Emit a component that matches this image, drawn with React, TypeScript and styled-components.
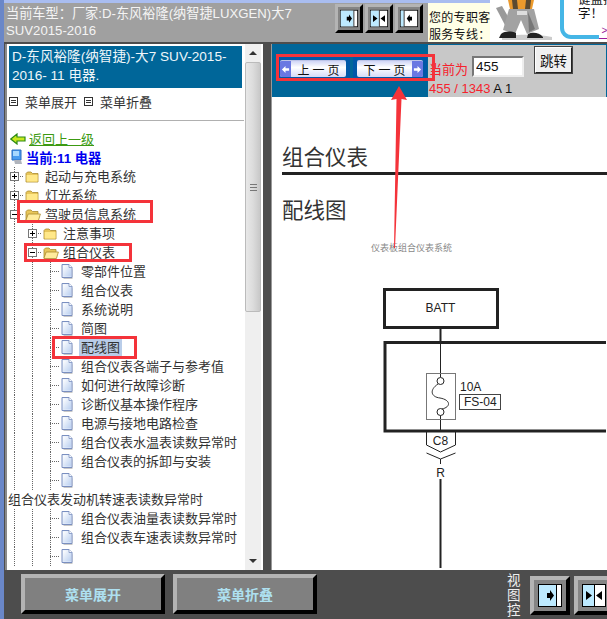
import React from 'react';
import styled, { createGlobalStyle } from 'styled-components';

const CJK = `"Liberation Sans", "Noto Sans CJK SC", sans-serif`;

const GlobalStyle = createGlobalStyle`
  html, body {
    margin: 0;
    padding: 0;
    background: #4d4d4d;
    overflow: hidden;
  }
  * { box-sizing: border-box; }
`;

const Window = styled.div`
  position: relative;
  width: 607px;
  height: 619px;
  overflow: hidden;
  display: flex;
  flex-direction: column;
  border-left: 4px solid #6a87c8;
  background: #4d4d4d;
  font-family: ${CJK};
  font-size: 13px;
  color: #222;
`;

/* header */
const Header = styled.header`
  display: flex;
  height: 42px;
  flex-shrink: 0;
`;

const HeaderMain = styled.div`
  display: flex;
  flex: 1;
  min-width: 0;
  border-top: 3px solid #a9bdf0;
  background: #a0a0a0;
`;

const CarTitle = styled.div`
  width: 331px;
  padding: 2px 0 0 2px;
  font-size: 13.2px;
  line-height: 17px;
  color: #f4f4f4;
`;

const HeaderButtons = styled.div`
  display: flex;
  gap: 2px;
  padding-top: 1px;
`;

const BevelButton = styled.button<{ $large?: boolean }>`
  display: flex;
  align-items: center;
  justify-content: center;
  flex-shrink: 0;
  padding: 0;
  width: ${({ $large }) => ($large ? '40px' : '28px')};
  height: ${({ $large }) => ($large ? '39px' : '29px')};
  border-style: solid;
  border-width: ${({ $large }) => ($large ? '4px' : '3px')};
  border-color: #b4b4b4 #000 #000 #b4b4b4;
  background: #858585;

  svg {
    width: ${({ $large }) => ($large ? '24px' : '18px')};
    height: ${({ $large }) => ($large ? '23px' : '19px')};
  }
`;

const Ad = styled.div`
  display: flex;
  width: 179px;
  flex-shrink: 0;
  background: #fff;
`;

const AdText = styled.div`
  width: 62px;
  padding: 7px 0 0 1px;
  border-top: 3px solid #a9bdf0;
  background: #ffffe6;
  font-size: 12px;
  line-height: 17px;
  letter-spacing: 0.3px;
  color: #111;
  white-space: nowrap;
`;

const Mechanic = styled.svg`
  width: 67px;
  height: 42px;
  flex-shrink: 0;
`;

const Bubble = styled.div`
  position: relative;
  flex: 1;
`;

const BubbleFrame = styled.div`
  height: 39px;
  margin-left: 3px;
  padding-left: 14px;
  border-left: 4px solid #45b6e6;
  border-bottom: 4px solid #45b6e6;
  border-bottom-left-radius: 11px;
  overflow: hidden;
  font-size: 12.5px;
  line-height: 14px;
  color: #111;
`;

const BubbleText = styled.div<{ $first?: boolean }>`
  margin-top: ${({ $first }) => ($first ? '-7px' : '0')};
  white-space: nowrap;
`;

const BubbleMore = styled.a`
  position: absolute;
  right: 0;
  top: 24px;
  width: 17px;
  height: 15px;
  padding-left: 3px;
  border-bottom: 1px solid #9a1a9a;
  background: #fff;
  font-size: 10px;
  line-height: 13px;
  color: #9a1a9a;
`;

/* main */
const Main = styled.main`
  display: flex;
  gap: 8px;
  height: 528px;
  flex-shrink: 0;
  padding: 2px 0 0 1px;
`;

const LeftPanel = styled.aside`
  display: flex;
  width: 258px;
  flex-shrink: 0;
  padding-right: 2px;
  border-left: 2px solid #8a8a8a;
  background: #fff;
`;

const Pane = styled.div`
  flex: 1;
  min-width: 0;
  overflow: hidden;
  padding-top: 2px;
`;

const ChapterTitle = styled.div`
  height: 42px;
  margin: 0 3px 0 2px;
  padding: 1px 0 0 3px;
  background: #006699;
  color: #eef6fa;
  font-size: 13.6px;
  line-height: 19px;
`;

const MenuLinks = styled.div`
  display: flex;
  align-items: center;
  gap: 7px;
  height: 19px;
  margin-top: 4px;
  padding: 0 2px;
  color: #333;
`;

const MenuLink = styled.span`
  display: flex;
  align-items: center;
  gap: 7px;
`;

const MenuIcon = styled.i`
  display: block;
  width: 9px;
  height: 9px;
  border: 1px solid #333;
  background: repeating-linear-gradient(#333 0 1px, #fff 1px 2px);
  background-clip: content-box;
  padding: 1px;
`;

const Divider = styled.hr`
  height: 1px;
  margin: 9px 1px 8px 0;
  border: 0;
  background: #b0b0b0;
`;

const InfoRow = styled.div`
  display: flex;
  align-items: center;
  height: 19px;
  padding-left: 3px;
`;

const BackLink = styled.a`
  margin-left: 3px;
  color: #3c9a12;
  text-decoration: underline;
`;

const CurrentLabel = styled.strong`
  margin-left: 3px;
  color: #0000f0;
  font-size: 13.3px;
`;

const Tree = styled.ul`
  margin: 0 0 0 -2px;
  padding: 0;
  list-style: none;
  white-space: nowrap;
`;

const Row = styled.li`
  display: flex;
  align-items: center;
  height: 19px;
  color: #333;
`;

const Cell = styled.span<{ $branch?: boolean }>`
  position: relative;
  display: flex;
  align-items: center;
  justify-content: center;
  width: 18px;
  height: 19px;
  flex-shrink: 0;
  background-repeat: no-repeat, repeat-y;
  background-image: ${({ $branch }) =>
      $branch ? 'repeating-linear-gradient(90deg, #666 0 1px, transparent 1px 2px)' : 'none'},
    linear-gradient(#666 50%, transparent 50%);
  background-size: 9px 1px, 1px 2px;
  background-position: 9px 9px, 9px 0;
`;

const Expander = styled.span<{ $open?: boolean }>`
  position: relative;
  width: 9px;
  height: 9px;
  margin-left: 1px;
  border: 1px solid #777;
  background: #fff;

  &::before {
    content: '';
    position: absolute;
    left: 1px;
    top: 3px;
    width: 5px;
    height: 1px;
    background: #000;
  }

  &::after {
    content: '';
    display: ${({ $open }) => ($open ? 'none' : 'block')};
    position: absolute;
    left: 3px;
    top: 1px;
    width: 1px;
    height: 5px;
    background: #000;
  }
`;

const IconSlot = styled.span`
  display: flex;
  width: 22px;
  padding-left: 2px;
  flex-shrink: 0;
`;

const Label = styled.span<{ $selected?: boolean }>`
  background: ${({ $selected }) => ($selected ? '#b9cde9' : 'transparent')};
  margin-left: ${({ $selected }) => ($selected ? '-2px' : '0')};
  padding: ${({ $selected }) => ($selected ? '0 2px' : '0')};
  line-height: 17px;
`;

const WrappedRow = styled.li`
  height: 19px;
  padding-left: 3px;
  line-height: 19px;
  color: #333;
`;

const Scrollbar = styled.div`
  display: flex;
  flex-direction: column;
  width: 16px;
  flex-shrink: 0;
  background: #efefef;
`;

const ScrollArrow = styled.div<{ $down?: boolean }>`
  display: flex;
  align-items: center;
  justify-content: center;
  height: 18px;
  flex-shrink: 0;

  &::before {
    content: '';
    border-left: 4px solid transparent;
    border-right: 4px solid transparent;
    border-${({ $down }) => ($down ? 'top' : 'bottom')}: 4px solid #333;
  }
`;

const ScrollTrack = styled.div`
  flex: 1;
  display: flex;
  flex-direction: column;
`;

const ScrollThumb = styled.div`
  display: flex;
  align-items: center;
  justify-content: center;
  height: 250px;
  border: 1px solid #bbb;
  border-radius: 2px;
  background: linear-gradient(90deg, #e8e8e8, #dcdcdc 50%, #c8c8c8);
`;

const ThumbGrip = styled.div`
  width: 7px;
  height: 7px;
  background: repeating-linear-gradient(#777 0 1px, transparent 1px 3px);
`;

const RightPanel = styled.section`
  position: relative;
  flex: 1;
  min-width: 0;
  display: flex;
  flex-direction: column;
  border-left: 1px solid #999;
  background: #fff;
`;

const NavBar = styled.div`
  display: flex;
  height: 53px;
  flex-shrink: 0;
  padding-right: 1px;
  background: #006699;
`;

const NavButtons = styled.div`
  display: flex;
  align-items: flex-end;
  width: 156px;
  flex-shrink: 0;
  gap: 3px;
  padding: 0 0 17px 4px;
`;

const PagerCell = styled.div`
  display: flex;
  justify-content: center;
  align-items: center;
  width: 74px;
  height: 23px;
  background: #0058a8;
`;

const PagerButton = styled.button`
  display: flex;
  align-items: center;
  width: 66px;
  height: 17px;
  padding: 0;
  border: 0;
  border-top: 1px solid #bcc4e8;
  border-radius: 2px;
  background: linear-gradient(#cfd5f6, #fff 40%, #d5dbf8);
  font-family: ${CJK};
  font-size: 12px;
  letter-spacing: 3px;
  color: #111;
  overflow: hidden;
`;

const PagerArrow = styled.span`
  display: flex;
  align-items: center;
  justify-content: center;
  width: 11px;
  height: 100%;
  flex-shrink: 0;
  background: #6a78e2;

  svg {
    width: 9px;
    height: 9px;
  }
`;

const PagerText = styled.span`
  flex: 1;
  padding-left: 3px;
  text-align: center;
`;

const PageInfo = styled.div`
  flex: 1;
  margin-top: 1px;
  display: grid;
  grid-template-columns: 43px 52px auto;
  grid-template-rows: 35px 17px;
  padding-left: 1px;
  background: #c8c8c8;
  color: #f5222d;
`;

const PageLabel = styled.span`
  align-self: end;
  margin-bottom: 2px;
  font-size: 13px;
  white-space: nowrap;
`;

const PageInput = styled.input`
  align-self: end;
  width: 52px;
  height: 21px;
  margin-bottom: 3px;
  padding: 0 0 0 2px;
  border: 2px solid;
  border-color: #777 #eee #eee #777;
  background: #fff;
  font-family: "Liberation Sans", sans-serif;
  font-size: 13.5px;
  color: #111;
`;

const JumpButton = styled.button`
  justify-self: start;
  align-self: start;
  width: 39px;
  height: 28px;
  margin: 1px 0 0 10px;
  padding: 0;
  border: 2px solid;
  border-color: #fff #222 #222 #fff;
  outline: 1px solid #444;
  outline-offset: -1px;
  background: #f0f0f0;
  font-family: ${CJK};
  font-size: 13.5px;
  color: #111;
`;

const PageCount = styled.div`
  grid-column: 1 / -1;
  font-size: 13px;
  line-height: 17px;
  white-space: nowrap;
`;

const PageRest = styled.span`
  color: #111;
`;

const Document = styled.article`
  flex: 1;
  min-height: 0;
  overflow: hidden;
  padding: 46px 0 0 10px;
`;

const DocTitle = styled.h1`
  margin: 0;
  height: 29px;
  padding-top: 2px;
  font-size: 21.5px;
  font-weight: 400;
  line-height: 27px;
  color: #333;
`;

const DocRule = styled.div`
  height: 3px;
  background: #222;
`;

const DocSubtitle = styled.h2`
  margin: 21px 0 0;
  font-size: 21.5px;
  font-weight: 400;
  line-height: 30px;
  color: #333;
`;

const Caption = styled.div`
  margin: 16px 0 0 89px;
  font-size: 9px;
  line-height: 12px;
  color: #888;
`;

const Diagram = styled.svg`
  display: block;
  margin: 26px 0 0 57px;
  width: 267px;
  height: 290px;
`;

/* footer */
const Footer = styled.footer`
  display: flex;
  align-items: flex-start;
  flex: 1;
  padding: 4px 0 0 17px;
  overflow: hidden;
`;

const FooterButton = styled.button`
  width: 144px;
  height: 40px;
  flex-shrink: 0;
  margin-right: 8px;
  padding: 0;
  border: 4px solid;
  border-color: #b4b4b4 #000 #000 #b4b4b4;
  background: #808080;
  font-family: ${CJK};
  font-size: 14px;
  font-weight: 700;
  color: #aee0f0;
`;

const ViewLabel = styled.div`
  width: 14px;
  margin: -1px 9px 0 182px;
  flex-shrink: 0;
  font-size: 13.5px;
  line-height: 15px;
  color: #eee;
`;

const ViewButtons = styled.div`
  display: flex;
  gap: 4px;
  padding-top: 2px;
`;

/* overlays drawn over the screenshot */
const Mark = styled.div<{ $x: number; $y: number; $w: number; $h: number }>`
  position: absolute;
  left: ${({ $x }) => $x - 4}px;
  top: ${({ $y }) => $y}px;
  width: ${({ $w }) => $w}px;
  height: ${({ $h }) => $h}px;
  border: 3px solid #f4333a;
  pointer-events: none;
`;

const ArrowOverlay = styled.svg`
  position: absolute;
  left: 380px;
  top: 84px;
  width: 30px;
  height: 170px;
  pointer-events: none;
`;

const FolderIcon = ({ open }: { open?: boolean }) => (
  <svg width="16" height="14" viewBox="0 0 16 14">
    <path d="M1 3.5 2.5 2H6l1.500 1.500H13V12H1z" fill="#e8c65a" stroke="#a98a2e" strokeWidth="0.8" />
    {open ? (
      <path d="M1 12 3.200 6H15.400L13.400 12.600H1z" fill="#ffeb9c" stroke="#a98a2e" strokeWidth="0.8" />
    ) : (
      <path d="M1.600 5h11v6.600h-11z" fill="#ffe889" />
    )}
  </svg>
);

const DocIcon = () => (
  <svg width="13" height="15" viewBox="0 0 13 15">
    <path d="M2.500 2h7v13h-7z M9.500 4l2 1.500V15h-2z" fill="#c8c8c8" />
    <path d="M1 .5h7l3 3V13.500H1z" fill="#e6eefb" stroke="#7a8fc0" strokeWidth="1" />
    <path d="M2 1.500h5v2h3v9H2z" fill="url(#docFill)" />
    <path d="M8 .5v3h3" fill="#fff" stroke="#7a8fc0" strokeWidth="0.8" />
    <defs>
      <linearGradient id="docFill" x1="0" y1="0" x2="1" y2="1">
        <stop offset="0" stopColor="#ffffff" />
        <stop offset="1" stopColor="#b9cff0" />
      </linearGradient>
    </defs>
  </svg>
);

const BackIcon = () => (
  <svg width="16" height="12" viewBox="0 0 16 12">
    <path d="M.8 6 7 1v3h8v4H7v3z" fill="#c8e81e" stroke="#2c8a14" strokeWidth="1.200" />
  </svg>
);

const ComputerIcon = () => (
  <svg width="13" height="17" viewBox="0 0 13 17">
    <path d="M2 1h9v10H2z" fill="#4a9cf0" stroke="#2b6cc0" />
    <path d="M3 2h6v5H3z" fill="#a8d8ff" />
    <path d="M4 11h7l1 4H5z" fill="#b0b4bc" />
  </svg>
);

const PagerGlyph = ({ flip }: { flip?: boolean }) => (
  <svg viewBox="0 0 10 10" transform={flip ? 'scale(-1 1)' : undefined}>
    <path d="M9 3.500H5V1L1 5l4 4V6.500h4z" fill="#fff" />
  </svg>
);

type ToggleKind = 'right' | 'both' | 'left';

const ToggleIcon = ({ kind }: { kind: ToggleKind }) => {
  const split = kind === 'right' ? 18 : kind === 'both' ? 12 : 5;
  return (
    <svg viewBox="0 0 24 23">
      <rect x="0.500" y="0.500" width="23" height="22" fill="#fff" stroke="#000" />
      <rect x="1" y="1" width={split - 1} height="21" fill="#bdeaff" />
      <path d={`M${split + 0.5} 1V22`} stroke="#000" />
      {kind === 'right' && <path d="M9 9h3V6l4 5.500-4 5.500v-3H9z" fill="#000" />}
      {kind === 'both' && <path d="M4 7v9l6-4.500zM20 7v9l-6-4.500z" fill="#000" />}
      {kind === 'left' && <path d="M16 9h-3V6l-4 5.500 4 5.500v-3h3z" fill="#000" />}
    </svg>
  );
};

type TreeNode = {
  level: number;
  label?: string;
  kind: 'closed' | 'open' | 'doc' | 'wrapped';
  selected?: boolean;
};

const nodes: TreeNode[] = [
  { level: 0, kind: 'closed', label: '起动与充电系统' },
  { level: 0, kind: 'closed', label: '灯光系统' },
  { level: 0, kind: 'open', label: '驾驶员信息系统' },
  { level: 1, kind: 'closed', label: '注意事项' },
  { level: 1, kind: 'open', label: '组合仪表' },
  { level: 2, kind: 'doc', label: '零部件位置' },
  { level: 2, kind: 'doc', label: '组合仪表' },
  { level: 2, kind: 'doc', label: '系统说明' },
  { level: 2, kind: 'doc', label: '简图' },
  { level: 2, kind: 'doc', label: '配线图', selected: true },
  { level: 2, kind: 'doc', label: '组合仪表各端子与参考值' },
  { level: 2, kind: 'doc', label: '如何进行故障诊断' },
  { level: 2, kind: 'doc', label: '诊断仪基本操作程序' },
  { level: 2, kind: 'doc', label: '电源与接地电路检查' },
  { level: 2, kind: 'doc', label: '组合仪表水温表读数异常时' },
  { level: 2, kind: 'doc', label: '组合仪表的拆卸与安装' },
  { level: 2, kind: 'doc' },
  { level: 0, kind: 'wrapped', label: '组合仪表发动机转速表读数异常时' },
  { level: 2, kind: 'doc', label: '组合仪表油量表读数异常时' },
  { level: 2, kind: 'doc', label: '组合仪表车速表读数异常时' },
  { level: 2, kind: 'doc' },
];

const TreeRow = ({ node }: { node: TreeNode }) => {
  if (node.kind === 'wrapped') return <WrappedRow>{node.label}</WrappedRow>;
  const isDoc = node.kind === 'doc';
  return (
    <Row>
      {Array.from({ length: node.level }).map((_, i) => (
        <Cell key={i} />
      ))}
      <Cell $branch>{!isDoc && <Expander $open={node.kind === 'open'} />}</Cell>
      <IconSlot>{isDoc ? <DocIcon /> : <FolderIcon open={node.kind === 'open'} />}</IconSlot>
      {node.label && <Label $selected={node.selected}>{node.label}</Label>}
    </Row>
  );
};

export default function App() {
  return (
    <>
      <GlobalStyle />
      <Window>
        <Header>
          <HeaderMain>
            <CarTitle>当前车型：厂家:D-东风裕隆(纳智捷LUXGEN)大7 SUV2015-2016</CarTitle>
            <HeaderButtons>
              <BevelButton><ToggleIcon kind="right" /></BevelButton>
              <BevelButton><ToggleIcon kind="both" /></BevelButton>
              <BevelButton><ToggleIcon kind="left" /></BevelButton>
            </HeaderButtons>
          </HeaderMain>
          <Ad>
            <AdText>
              您的专职客
              <br />
              服务专线：
            </AdText>
            <Mechanic viewBox="0 0 67 42">
              <path d="M12 37c12-3 36-3 50 0v3H12z" fill="#ccc" />
              <path d="M6 8 12 6 20 20 16 27z" fill="#9a9a9a" />
              <path d="M18 0h26l-2 9H20z" fill="#ec9a2c" />
              <path d="M22 0h5l1 9h-5zM36 0h5l-1 9h-5z" fill="#5c4a30" />
              <path d="M19 9h25l5 20-12 5-6-14-6 14-12-4z" fill="#a2a2a2" />
              <path d="M27 11h10v4H27z" fill="#ddd" />
              <path d="M38 12l7 17-6 3z" fill="#777" />
              <path d="M11 34c4-3 10-3 15-1v5H9zM38 34c4-2 11-2 15 3v1H37z" fill="#222" />
            </Mechanic>
            <Bubble>
              <BubbleFrame>
                <BubbleText $first>键盘拉</BubbleText>
                <BubbleText>字！</BubbleText>
              </BubbleFrame>
              <BubbleMore>&gt;&gt;</BubbleMore>
            </Bubble>
          </Ad>
        </Header>

        <Main>
          <LeftPanel>
            <Pane>
              <ChapterTitle>D-东风裕隆(纳智捷)-大7 SUV-2015-2016- 11 电器.</ChapterTitle>
              <MenuLinks>
                <MenuLink><MenuIcon />菜单展开</MenuLink>
                <MenuLink><MenuIcon />菜单折叠</MenuLink>
              </MenuLinks>
              <Divider />
              <InfoRow>
                <BackIcon />
                <BackLink>返回上一级</BackLink>
              </InfoRow>
              <InfoRow>
                <ComputerIcon />
                <CurrentLabel>当前:11 电器</CurrentLabel>
              </InfoRow>
              <Tree>
                {nodes.map((node, i) => (
                  <TreeRow key={i} node={node} />
                ))}
              </Tree>
            </Pane>
            <Scrollbar>
              <ScrollArrow />
              <ScrollTrack>
                <ScrollThumb><ThumbGrip /></ScrollThumb>
              </ScrollTrack>
              <ScrollArrow $down />
            </Scrollbar>
          </LeftPanel>

          <RightPanel>
            <NavBar>
              <NavButtons>
                <PagerCell>
                  <PagerButton>
                    <PagerArrow><PagerGlyph /></PagerArrow>
                    <PagerText>上一页</PagerText>
                  </PagerButton>
                </PagerCell>
                <PagerCell>
                  <PagerButton>
                    <PagerText>下一页</PagerText>
                    <PagerArrow><PagerGlyph flip /></PagerArrow>
                  </PagerButton>
                </PagerCell>
              </NavButtons>
              <PageInfo>
                <PageLabel>当前为</PageLabel>
                <PageInput readOnly value="455" />
                <JumpButton>跳转</JumpButton>
                <PageCount>
                  455 / 1343 <PageRest>A 1</PageRest>
                </PageCount>
              </PageInfo>
            </NavBar>
            <Document>
              <DocTitle>组合仪表</DocTitle>
              <DocRule />
              <DocSubtitle>配线图</DocSubtitle>
              <Caption>仪表板组合仪表系统</Caption>
              <Diagram viewBox="340 280 267 290" fontFamily="Liberation Sans, sans-serif" fontSize="12" fill="#222">
                <rect x="385.500" y="289.500" width="113" height="38" fill="none" stroke="#222" strokeWidth="3" />
                <text x="441.500" y="312" textAnchor="middle">BATT</text>
                <path d="M441.500 328V342" stroke="#222" strokeWidth="2" />
                <path d="M441.500 342V377M441.500 415V431" stroke="#222" />
                <path d="M607 342.500H386V431H607" fill="none" stroke="#222" strokeWidth="3" />
                <rect x="427.500" y="373.500" width="29" height="46" fill="none" stroke="#777" />
                <circle cx="441.500" cy="381" r="3.500" fill="#fff" stroke="#222" />
                <circle cx="441.500" cy="412" r="3.500" fill="#fff" stroke="#222" />
                <path d="M439 384C430 390 432 397 441 398C452 400 452 407 443 409" fill="none" stroke="#333" />
                <text x="461" y="391">10A</text>
                <rect x="460.500" y="394.500" width="41" height="15" fill="#fff" stroke="#444" />
                <text x="465" y="406">FS-04</text>
                <path d="M427.500 431V445L441.500 452L456.500 445V431" fill="none" stroke="#222" />
                <text x="441.500" y="445" textAnchor="middle">C8</text>
                <path d="M427.500 453L441.500 459L456.500 453M441.500 459V464" fill="none" stroke="#222" />
                <text x="441.500" y="477" textAnchor="middle">R</text>
                <path d="M441.500 479V568" stroke="#222" strokeWidth="2" />
              </Diagram>
            </Document>
          </RightPanel>
        </Main>

        <Footer>
          <FooterButton>菜单展开</FooterButton>
          <FooterButton>菜单折叠</FooterButton>
          <ViewLabel>视图控</ViewLabel>
          <ViewButtons>
            <BevelButton $large><ToggleIcon kind="right" /></BevelButton>
            <BevelButton $large><ToggleIcon kind="both" /></BevelButton>
          </ViewButtons>
        </Footer>

        <Mark $x={17} $y={200} $w={136} $h={23} />
        <Mark $x={24} $y={243} $w={108} $h={19} />
        <Mark $x={52} $y={336} $w={85} $h={23} />
        <Mark $x={276} $y={54} $w={159} $h={27} />
        <ArrowOverlay viewBox="0 0 30 170">
          <path d="M15 2 L23 16 L17.500 15 L11 164 L10 164 L12.500 15 L7 16Z" fill="#f4333a" />
        </ArrowOverlay>
      </Window>
    </>
  );
}
